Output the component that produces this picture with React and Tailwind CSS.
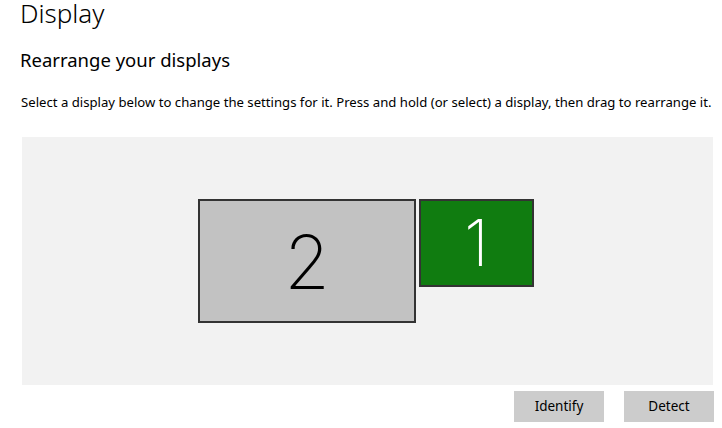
export default function App() {
  return (
    <div className="w-[722px] h-[428px] bg-white overflow-hidden pl-5 text-black font-['Noto_Sans','Open_Sans',sans-serif]">
      <h1 className="text-[26px] font-light leading-[26px]">Display</h1>
      <h2 className="text-[18.5px] leading-[24px] mt-[22px]">Rearrange your displays</h2>
      <p className="text-[13.15px] leading-[18px] mt-[21px] ml-px whitespace-nowrap">
        Select a display below to change the settings for it. Press and hold (or select) a display, then drag to rearrange it.
      </p>
      <div className="mt-[26px] ml-[2px] w-[691px] h-[248px] bg-[#f2f2f2] flex items-start pl-[176px] pt-[62px] gap-[3px]">
        <div className="w-[218px] h-[124px] bg-[#c2c2c2] border-2 border-[#333333] flex items-center justify-center">
          <span className="text-[74px] font-extralight leading-none text-black pt-[2px] font-['Inter',sans-serif]">2</span>
        </div>
        <div className="w-[115px] h-[88px] bg-[#107c10] border-2 border-[#333333] flex items-center justify-center">
          <span className="text-[64px] font-extralight leading-none text-white font-['Inter',sans-serif]">1</span>
        </div>
      </div>
      <div className="flex justify-end gap-5 mt-[6px] w-[694px]">
        <button className="w-[90px] h-[31px] bg-[#cccccc] text-[13.5px] text-black">Identify</button>
        <button className="w-[90px] h-[31px] bg-[#cccccc] text-[13.5px] text-black">Detect</button>
      </div>
    </div>
  )
}
